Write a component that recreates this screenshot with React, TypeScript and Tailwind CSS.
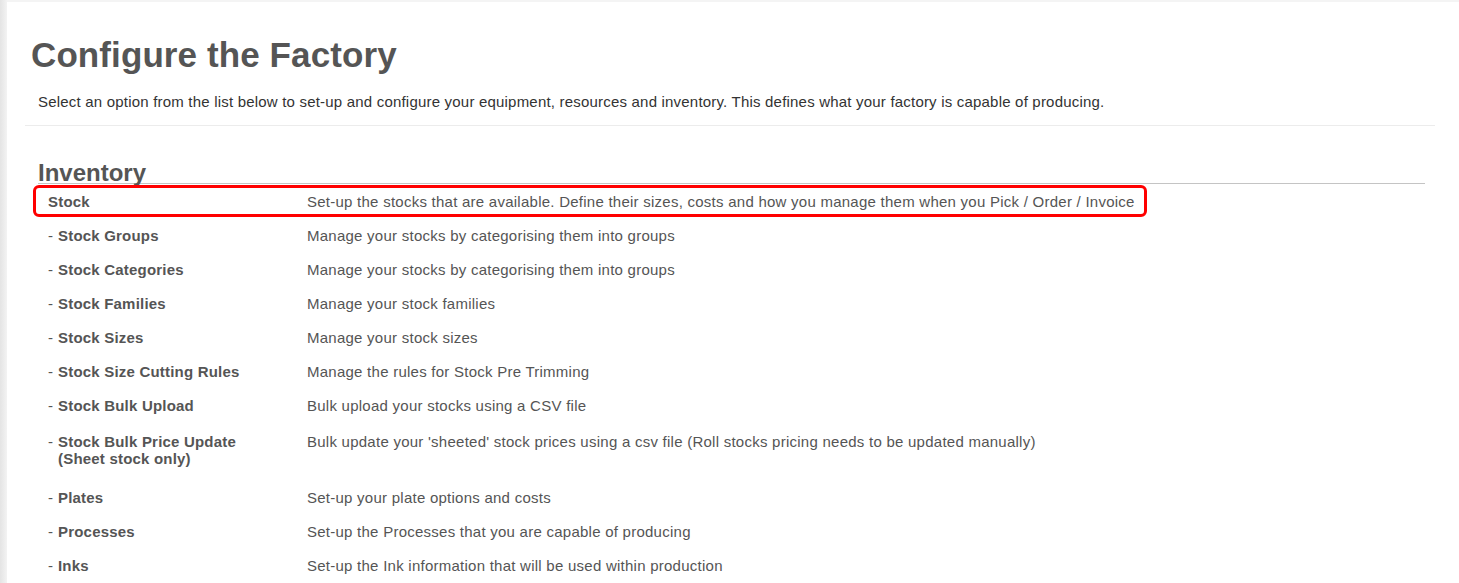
import React from "react";

type Item = { label: string; sub?: string; desc: string };

const items: Item[] = [
  { label: "Stock Groups", desc: "Manage your stocks by categorising them into groups" },
  { label: "Stock Categories", desc: "Manage your stocks by categorising them into groups" },
  { label: "Stock Families", desc: "Manage your stock families" },
  { label: "Stock Sizes", desc: "Manage your stock sizes" },
  { label: "Stock Size Cutting Rules", desc: "Manage the rules for Stock Pre Trimming" },
  { label: "Stock Bulk Upload", desc: "Bulk upload your stocks using a CSV file" },
  {
    label: "Stock Bulk Price Update",
    sub: "(Sheet stock only)",
    desc: "Bulk update your 'sheeted' stock prices using a csv file (Roll stocks pricing needs to be updated manually)",
  },
  { label: "Plates", desc: "Set-up your plate options and costs" },
  { label: "Processes", desc: "Set-up the Processes that you are capable of producing" },
  { label: "Inks", desc: "Set-up the Ink information that will be used within production" },
];

function Row({ item }: { item: Item }) {
  if (item.sub) {
    return (
      <div className="flex h-[58px] pt-[10px] leading-[17px]">
        <div className="flex w-[269px] shrink-0 pl-[10px]">
          <span className="w-[10px] shrink-0">-</span>
          <div className="font-bold tracking-[0.2px]">
            <div>{item.label}</div>
            <div>{item.sub}</div>
          </div>
        </div>
        <div className="tracking-[0.25px]">{item.desc}</div>
      </div>
    );
  }
  return (
    <div className="flex h-[34px] items-center">
      <div className="flex w-[269px] shrink-0 pl-[10px]">
        <span className="w-[10px] shrink-0">-</span>
        <span className="font-bold tracking-[0.2px]">{item.label}</span>
      </div>
      <div className="tracking-[0.25px]">{item.desc}</div>
    </div>
  );
}

export default function App() {
  return (
    <div className="flex min-h-[583px] bg-white font-['Liberation_Sans',Arial,sans-serif] text-[#555]">
      <div className="w-[7px] shrink-0 bg-gradient-to-r from-[#e4e4e4] to-[#f3f3f3]" />
      <div className="flex-1 border-t-2 border-[#f4f4f4]">
        <div className="ml-[18px] mr-[24px] border-b border-[#ececec] pb-[13px]">
          <h1 className="ml-[6px] mt-[33px] text-[35px] font-bold leading-[40px] tracking-[0.1px] text-[#555]">
            Configure the Factory
          </h1>
          <p className="ml-[13px] mt-[17px] text-[15px] leading-[20px] tracking-[0.2px] text-[#333]">
            Select an option from the list below to set-up and configure your equipment, resources and inventory. This
            defines what your factory is capable of producing.
          </p>
        </div>
        <div className="ml-[31px] mr-[34px] mt-[33px]">
          <h2 className="border-b border-[#c4c4c4] pt-[4px] text-[24px] font-bold leading-[20px] text-[#555]">
            Inventory
          </h2>
          <div className="mt-[1px] text-[15px]">
            <div className="relative flex h-[34px] items-center">
              <div className="w-[269px] shrink-0 pl-[10px] font-bold tracking-[0.2px]">Stock</div>
              <div className="tracking-[0.25px]">
                Set-up the stocks that are available. Define their sizes, costs and how you manage them when you Pick / Order / Invoice
              </div>
              <div className="absolute left-[-5px] top-0 h-[32px] w-[1114px] rounded-[6px] border-[3px] border-[#f00]" />
            </div>
            {items.map((it) => (
              <Row key={it.label} item={it} />
            ))}
          </div>
        </div>
      </div>
    </div>
  );
}
